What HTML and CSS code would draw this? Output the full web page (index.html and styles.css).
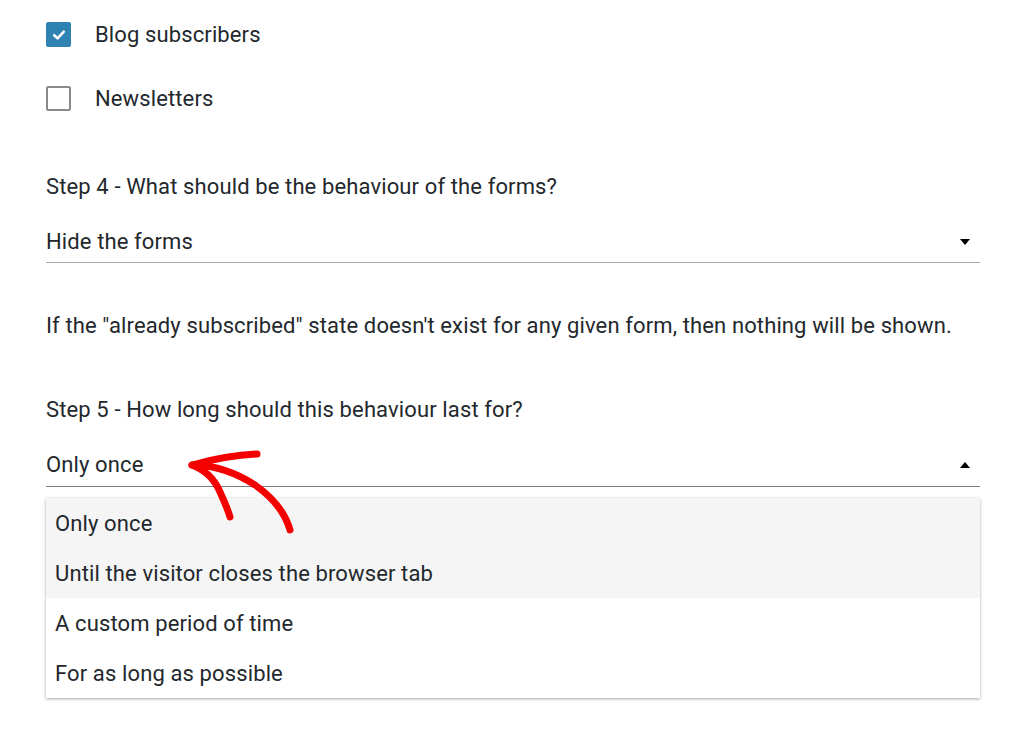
FILE: index.html
```html
<!DOCTYPE html>
<html lang="en">
<head>
    <meta charset="UTF-8">
    <title>Already subscribed</title>
    <link rel="stylesheet" href="styles.css">
</head>
<body>
    <div class="page">
        <div class="check-row">
            <span class="box checked">
                <svg width="16" height="16" viewBox="0 0 16 16"><path d="M3.2 8.2 L6.6 11.4 L12.8 4.6" fill="none" stroke="#fff" stroke-width="2.6" stroke-linecap="round" stroke-linejoin="round"/></svg>
            </span>
            <span>Blog subscribers</span>
        </div>
        <div class="check-row">
            <span class="box"></span>
            <span>Newsletters</span>
        </div>

        <p class="label step4">Step 4 - What should be the behaviour of the forms?</p>
        <div class="select">
            <span>Hide the forms</span>
            <span class="caret down"></span>
        </div>

        <p class="note">If the "already subscribed" state doesn't exist for any given form, then nothing will be shown.</p>

        <p class="label step5">Step 5 - How long should this behaviour last for?</p>
        <div class="select open">
            <span>Only once</span>
            <span class="caret up"></span>
        </div>
        <ul class="menu">
            <li class="hover">Only once</li>
            <li class="hover">Until the visitor closes the browser tab</li>
            <li>A custom period of time</li>
            <li>For as long as possible</li>
        </ul>

        <svg class="scribble" width="140" height="100" viewBox="180 440 140 100">
            <g fill="none" stroke="#f40000" stroke-width="7" stroke-linecap="round" stroke-linejoin="round">
                <path d="M192 465 C210 460 235 455 257 454"/>
                <path d="M192 465 C205 470 215 480 220 492 C225 503 228 510 230 517"/>
                <path d="M196 465 C215 466 235 472 255 485 C272 497 285 512 290 530"/>
            </g>
        </svg>
    </div>
</body>
</html>
```
FILE: styles.css
```css
body{
    margin: 0;
    background: #fff;
    font-family: Roboto, "Liberation Sans", sans-serif;
    font-size: 22px;
    letter-spacing: 0.12px;
    color: #23282d;
}
.page{
    position: relative;
    width: 934px;
    padding: 22px 0 40px 46px;
}
.check-row{
    display: flex;
    align-items: center;
    gap: 24px;
    height: 25px;
    line-height: 24px;
    margin-bottom: 39px;
}
.box{
    box-sizing: border-box;
    width: 25px;
    height: 25px;
    border: 2px solid #8a8a8a;
    border-radius: 2px;
    background: #fff;
    display: flex;
    align-items: center;
    justify-content: center;
}
.box.checked{
    border: 0;
    background: #2e83b3;
}
.label,.note{
    margin: 0;
    line-height: 26px;
}
.step4{
    margin-top: 63px;
}
.step5{
    margin-top: 58px;
}
.select{
    margin-top: 29px;
    display: flex;
    justify-content: space-between;
    align-items: center;
    line-height: 26px;
    padding-bottom: 7px;
    border-bottom: 1px solid #a8a8a8;
}
.select.open{
    padding-bottom: 8px;
    border-bottom-color: #7c7c7c;
}
.caret{
    width: 0;
    height: 0;
    margin-right: 10px;
    border-left: 5px solid transparent;
    border-right: 5px solid transparent;
}
.caret.down{
    border-top: 6px solid #000;
}
.caret.up{
    border-bottom: 6px solid #000;
}
.note{
    margin-top: 50px;
}
.menu{
    list-style: none;
    margin: 11px 0 0 0;
    padding: 0;
    background: #fff;
    box-shadow: 0 1px 3px rgba(0,0,0,0.35);
}
.menu li{
    height: 49px;
    padding-top: 1px;
    line-height: 50px;
    padding-left: 9px;
}
.menu li.hover{
    background: #f5f5f5;
}
.scribble{
    position: absolute;
    left: 180px;
    top: 440px;
}
```
